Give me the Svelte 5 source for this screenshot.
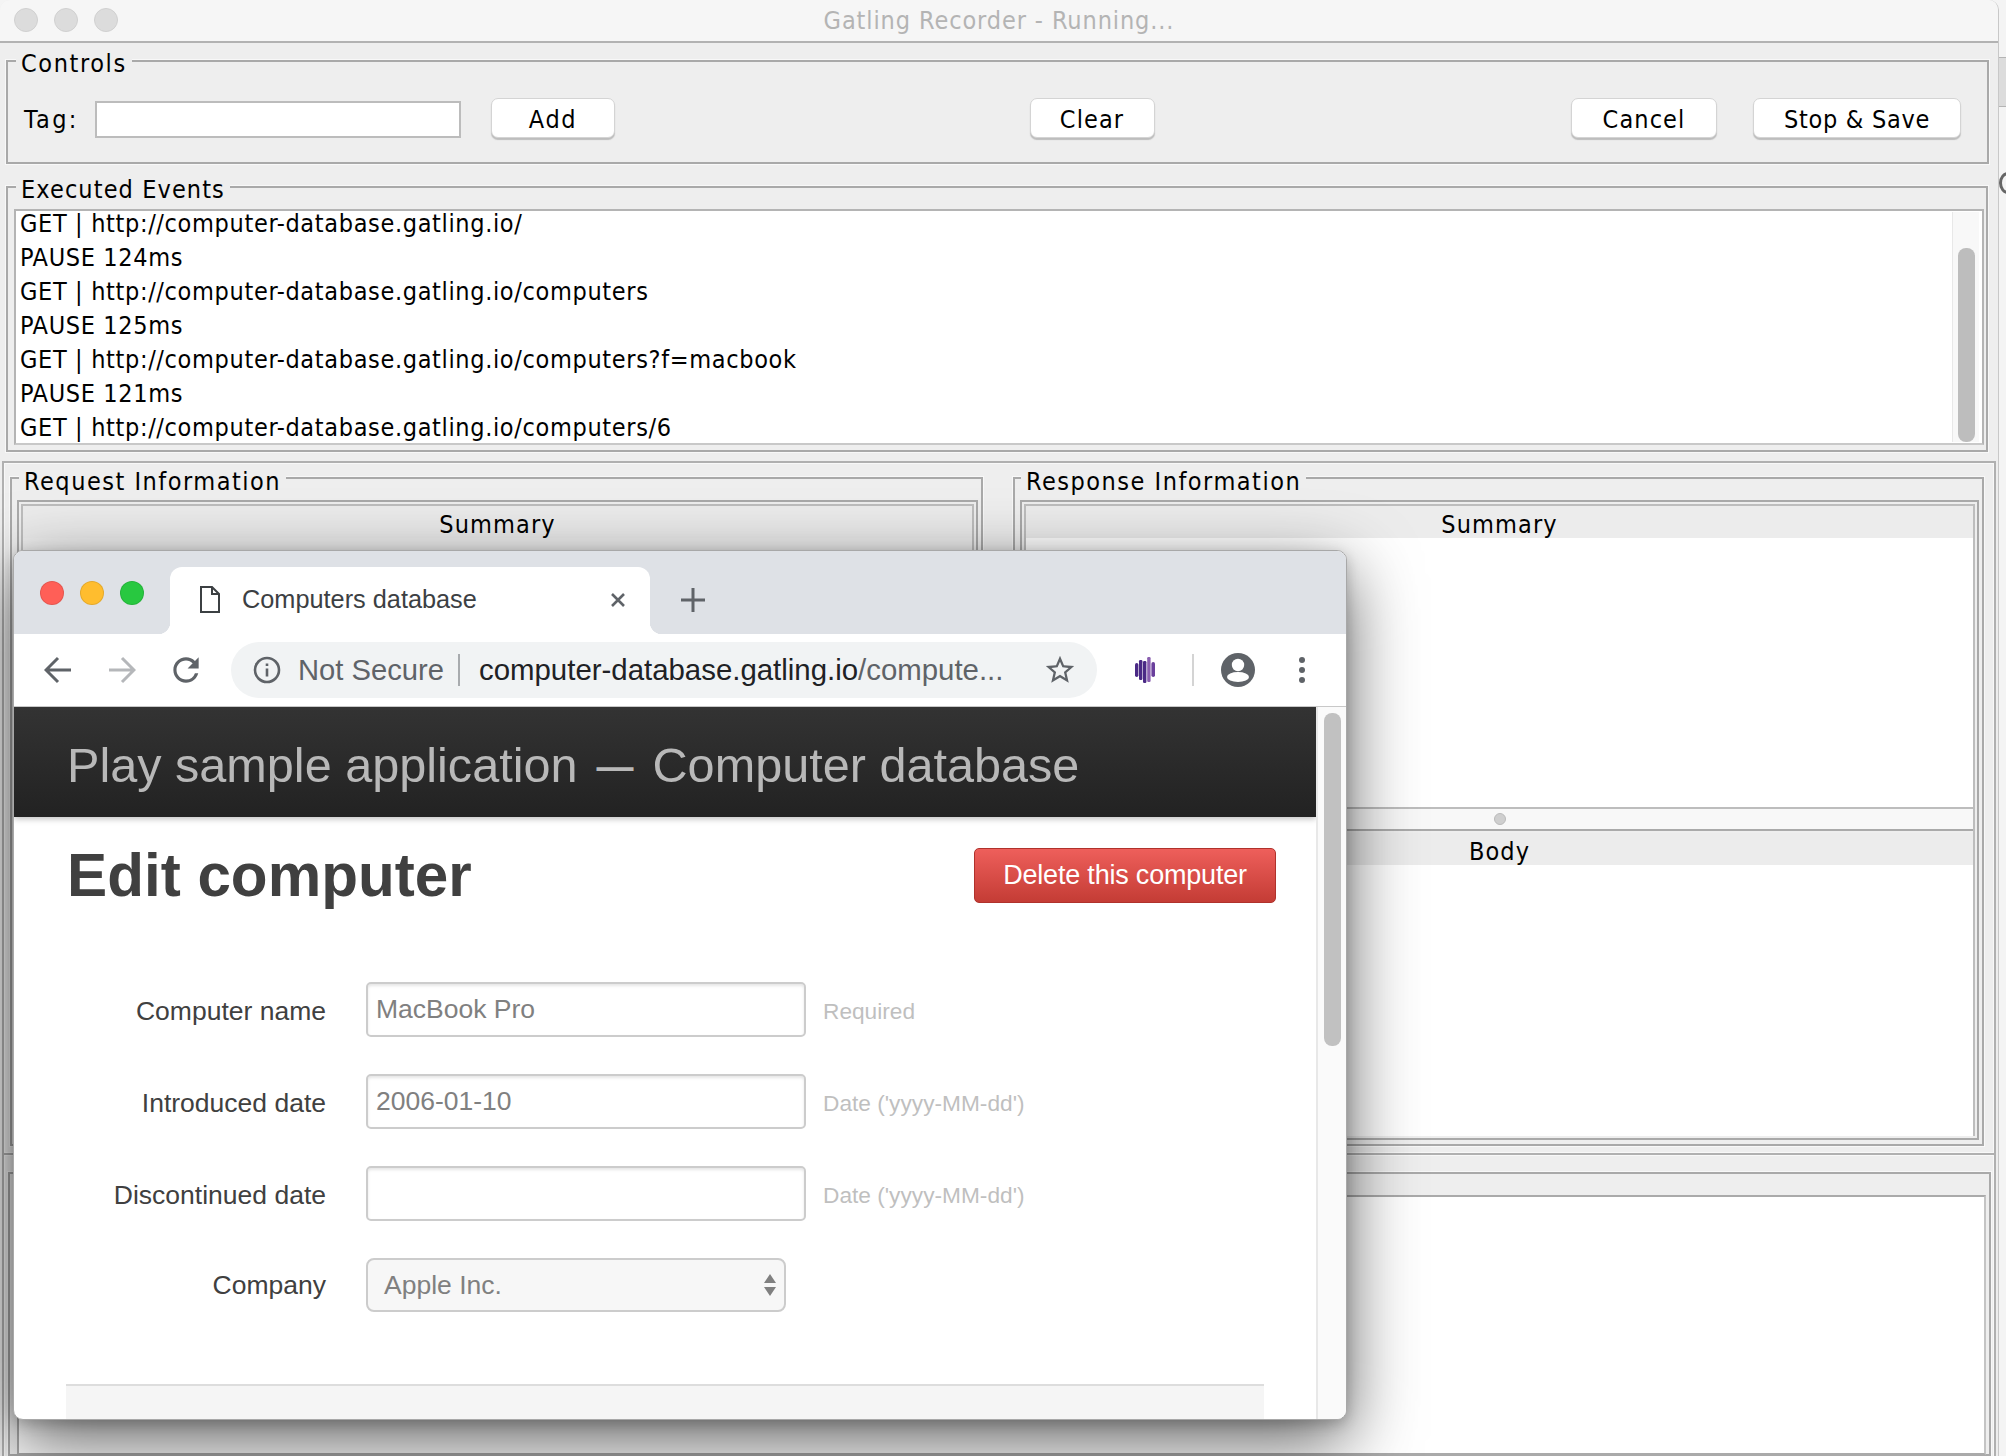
<script>
  const events = [
    'GET | http://computer-database.gatling.io/',
    'PAUSE 124ms',
    'GET | http://computer-database.gatling.io/computers',
    'PAUSE 125ms',
    'GET | http://computer-database.gatling.io/computers?f=macbook',
    'PAUSE 121ms',
    'GET | http://computer-database.gatling.io/computers/6'
  ];
  const fields = [
    { label: 'Computer name', value: 'MacBook Pro', help: 'Required' },
    { label: 'Introduced date', value: '2006-01-10', help: "Date ('yyyy-MM-dd')" },
    { label: 'Discontinued date', value: '', help: "Date ('yyyy-MM-dd')" }
  ];
</script>

<div class="desk">
  <div class="java">
    <div class="titlebar">
      <div class="lights"><i></i><i></i><i></i></div>
      <span class="wtitle">Gatling Recorder - Running...</span>
    </div>

    <section class="group controls">
      <span class="legend ctl-legend">Controls</span>
      <div class="ctl-row">
        <div class="ctl-left">
          <span class="tag">Tag:</span>
          <div class="jinput"></div>
          <div class="jbtn add">Add</div>
        </div>
        <div class="jbtn clear">Clear</div>
        <div class="ctl-right">
          <div class="jbtn cancel">Cancel</div>
          <div class="jbtn stop">Stop &amp; Save</div>
        </div>
      </div>
    </section>

    <section class="group events">
      <span class="legend">Executed Events</span>
      <div class="list">
        <div class="lines">
          {#each events as e}<div class="line">{e}</div>{/each}
        </div>
        <div class="track"><div class="thumb"></div></div>
      </div>
    </section>

    <div class="panel one">
      <section class="group info req">
        <span class="legend">Request Information</span>
        <div class="split">
          <div class="hdr">Summary</div>
        </div>
      </section>
      <section class="group info res">
        <span class="legend">Response Information</span>
        <div class="split">
          <div class="hdr">Summary</div>
          <div class="pane top"></div>
          <div class="grip"><i></i></div>
          <div class="hdr body-hdr">Body</div>
          <div class="pane"></div>
        </div>
      </section>
    </div>

    <div class="panel two">
      <section class="group bottom">
        <div class="blist"></div>
      </section>
    </div>
  </div>

  <div class="behind">
    <div class="band"></div>
    <div class="arc"></div>
  </div>

  <div class="browser">
    <div class="tabstrip">
      <div class="dots"><i class="r"></i><i class="y"></i><i class="g"></i></div>
      <div class="tab">
        <svg class="doc" width="20" height="27" viewBox="0 0 20 27" fill="none" stroke="#3c4043" stroke-width="2">
          <path d="M1 1H12L19 8V26H1Z" /><path d="M12 1V8H19" />
        </svg>
        <span class="tabtitle">Computers database</span>
        <svg class="close" width="16" height="16" viewBox="0 0 16 16" stroke="#5f6368" stroke-width="2.6">
          <path d="M2 2L14 14M14 2L2 14" />
        </svg>
      </div>
      <svg class="plus" width="24" height="24" viewBox="0 0 24 24" stroke="#5f6368" stroke-width="3">
        <path d="M12 0V24M0 12H24" />
      </svg>
    </div>

    <div class="toolbar">
      <svg class="nav back" width="28" height="28" viewBox="0 0 28 28" fill="none" stroke="#5f6368" stroke-width="3">
        <path d="M27 14H3M14 2L2 14L14 26" />
      </svg>
      <svg class="nav fwd" width="28" height="28" viewBox="0 0 28 28" fill="none" stroke="#b5b7ba" stroke-width="3">
        <path d="M1 14H25M14 2L26 14L14 26" />
      </svg>
      <svg class="nav reload" width="38" height="38" viewBox="0 0 24 24" fill="#5f6368">
        <path d="M17.65 6.35A7.958 7.958 0 0 0 12 4c-4.42 0-7.99 3.58-7.99 8s3.57 8 7.99 8c3.73 0 6.84-2.55 7.73-6h-2.08A5.99 5.99 0 0 1 12 18c-3.31 0-6-2.69-6-6s2.69-6 6-6c1.66 0 3.14.69 4.22 1.78L13 11h7V4l-2.35 2.35z" />
      </svg>
      <div class="omni">
        <svg class="infoi" width="28" height="28" viewBox="0 0 28 28" fill="none" stroke="#5f6368" stroke-width="2.6">
          <circle cx="14" cy="14" r="12" /><path d="M14 12.5V20.5M14 7.5V10" />
        </svg>
        <span class="insecure">Not Secure</span>
        <span class="odiv"></span>
        <span class="url">computer-database.gatling.io<span class="urlrest">/compute...</span></span>
        <svg class="star" width="34" height="34" viewBox="0 0 24 24" fill="#5f6368">
          <path d="M22 9.24l-7.19-.62L12 2 9.19 8.63 2 9.24l5.46 4.73L5.82 21 12 17.27 18.18 21l-1.63-7.03L22 9.24zM12 15.4l-3.76 2.27 1-4.28-3.32-2.88 4.38-.38L12 6.1l1.71 4.04 4.38.38-3.32 2.88 1 4.28L12 15.4z" />
        </svg>
      </div>
      <svg class="gat" width="20" height="26" viewBox="0 0 20 26">
        <rect x="0" y="6" width="3.4" height="14" rx="1.7" fill="#4b2a86" />
        <rect x="4" y="3" width="3.4" height="20" rx="1.2" fill="#4b2a86" />
        <rect x="8" y="4" width="3.4" height="22" rx="1.2" fill="#4b2a86" />
        <rect x="12.2" y="0" width="3.4" height="25" rx="1.2" fill="#8a5fb0" />
        <rect x="16.4" y="5" width="3.6" height="15" rx="1.8" fill="#6a3f9c" />
      </svg>
      <span class="tdiv"></span>
      <svg class="avatar" width="34" height="34" viewBox="0 0 34 34">
        <circle cx="17" cy="17" r="17" fill="#5f6368" />
        <circle cx="17" cy="12" r="6.2" fill="#fff" />
        <ellipse cx="17" cy="24" rx="11" ry="5" fill="#fff" />
      </svg>
      <svg class="menu" width="6" height="26" viewBox="0 0 6 26" fill="#5f6368">
        <circle cx="3" cy="3" r="3" /><circle cx="3" cy="13" r="3" /><circle cx="3" cy="23" r="3" />
      </svg>
    </div>

    <div class="viewport">
      <div class="page">
        <header class="topbar"><span>Play sample application<span class="dash">—</span>Computer database</span></header>
        <div class="head">
          <h1>Edit computer</h1>
          <div class="delete">Delete this computer</div>
        </div>
        <div class="form">
          {#each fields as f}
            <div class="row">
              <span class="lbl">{f.label}</span>
              <div class="input">{f.value}</div>
              <span class="help">{f.help}</span>
            </div>
          {/each}
          <div class="row">
            <span class="lbl">Company</span>
            <div class="select">
              <span>Apple Inc.</span>
              <svg width="12" height="22" viewBox="0 0 12 22" fill="#808080">
                <path d="M6 0L12 9H0ZM0 13H12L6 22Z" />
              </svg>
            </div>
          </div>
        </div>
        <div class="actions"></div>
      </div>
      <div class="vbar"><div class="vthumb"></div></div>
    </div>
  </div>
</div>

<style>
  :global(body) { margin: 0; background: #f4f4f4; }
  .desk {
    width: 2006px; height: 1456px; display: flex; overflow: hidden; position: relative;
    background: #f4f4f4; font-family: "Liberation Sans", Arial, sans-serif;
  }

  /* Java window */
  .java {
    width: 1999px; height: 1456px; flex: none; background: #eeeeee; overflow: hidden;
    border-radius: 10px 10px 0 0; box-sizing: border-box; border-right: 1px solid #c8c8c8;
    font-family: "DejaVu Sans", sans-serif; font-stretch: condensed; font-size: 25px; color: #000;
    letter-spacing: 1.1px;
  }
  .titlebar {
    height: 41px; background: #f6f6f6; border-bottom: 2px solid #b2b2b2;
    display: flex; align-items: center; justify-content: center; position: relative;
  }
  .lights { position: absolute; left: 14px; top: 8px; display: flex; gap: 16px; }
  .lights i { width: 22px; height: 22px; border-radius: 50%; background: #dcdcdc; border: 1px solid #d0d0d0; }
  .wtitle { color: #b4b4b4; font-size: 25px; letter-spacing: .9px; }

  .group { position: relative; box-sizing: border-box; border: 2px solid #a9a9a9; box-shadow: 0 0 0 1px #f8f8f8; }
  .legend {
    position: absolute; top: -13px; left: 8px; background: #eeeeee; padding: 0 5px;
    line-height: 30px; white-space: nowrap;
  }
  .ctl-legend { letter-spacing: 1.6px; }

  .controls { margin: 17px 0 0 6px; width: 1983px; height: 104px; }
  .ctl-row {
    display: flex; justify-content: space-between; align-items: center;
    height: 40px; margin-top: 37px; padding: 0 26px 0 16px;
  }
  .ctl-left, .ctl-right { display: flex; align-items: center; }
  .tag { width: 71px; letter-spacing: 2.4px; }
  .jinput { width: 366px; height: 37px; box-sizing: border-box; background: #fff; border: 2px solid #bcbcbc; margin-right: 30px; }
  .jbtn {
    height: 40px; box-sizing: border-box; background: #fff; border: 1px solid #d4d4d4; border-radius: 7px;
    box-shadow: 0 2px 1px #bdbdbd; display: flex; align-items: center; justify-content: center; margin-top: -2px;
    padding-top: 3px;
  }
  .add { width: 124px; letter-spacing: 1.6px; }
  .clear { width: 125px; margin-right: 2px; }
  .cancel { width: 146px; margin-right: 36px; }
  .stop { width: 208px; letter-spacing: .7px; }

  .events { margin: 22px 0 0 6px; width: 1982px; height: 266px; padding: 21px 2px 5px 6px; }
  .list {
    height: 236px; box-sizing: border-box; background: #fff; border: 2px solid #b4b4b4; border-bottom-color: #c8c8c8;
    display: flex; overflow: hidden;
  }
  .lines { flex: 1; padding: 0 0 0 4px; margin-top: -4px; letter-spacing: .65px; }
  .line { height: 34px; line-height: 34px; white-space: nowrap; }
  .track { width: 27px; margin: 1px 3px 1px 0; box-sizing: border-box; background: #f8f8f8; border-left: 1px solid #e8e8e8; padding: 36px 4px 0 5px; }
  .thumb { height: 194px; background: #bdbdbd; border-radius: 8px; }

  .panel { box-sizing: border-box; width: 1994px; margin-left: 2px; border: 2px solid #b0b0b0; box-shadow: inset 0 0 0 1px #f8f8f8; }
  .one { margin-top: 9px; height: 694px; display: flex; padding: 14px 0 0 6px; }
  .info { height: 669px; }
  .req { width: 973px; margin-right: 30px; }
  .res { width: 971px; }
  .info .legend { left: 6px; top: -12px; letter-spacing: 1.5px; }
  .req .legend { left: 7px; }
  .split {
    position: absolute; left: 5px; right: 3px; top: 21px; bottom: 4px; box-sizing: border-box;
    border: 2px solid #a9a9a9; padding: 2px; box-shadow: inset 0 0 0 2px #eee, inset 0 0 0 4px #bdbdbd;
    display: flex; flex-direction: column;
  }
  .hdr {
    height: 32px; margin: 2px 2px 0; flex: none; background: #ececec;
    display: flex; align-items: center; justify-content: center; padding-top: 5px; box-sizing: border-box;
  }
  .pane { flex: 1; background: #fff; margin: 0 2px; }
  .pane.top { flex: none; height: 269px; }
  .grip { height: 24px; flex: none; background: #f8f8f8; border-top: 2px solid #bdbdbd; border-bottom: 2px solid #aaa; display: flex; align-items: center; justify-content: center; margin: 0 2px; box-sizing: border-box; }
  .grip i { width: 12px; height: 12px; border-radius: 50%; background: #cfcfcf; border: 1px solid #bbb; box-sizing: border-box; }
  .body-hdr { margin-top: 2px; }

  .two { height: 302px; border-bottom: 0; border-top: 0; padding: 17px 0 0 4px; }
  .bottom { width: 1983px; height: 284px; padding: 21px 3px 0 7px; }
  .blist { height: 260px; background: #fff; border: 2px solid #aaa; border-right-color: #c4c4c4; box-sizing: border-box; }

  .behind { flex: 1; background: #f4f4f4; position: relative; overflow: hidden; }
  .band { margin-top: 57px; height: 50px; box-sizing: border-box; background: #dcdcdc; border: solid #b4b4b4; border-width: 1px 0; }
  .arc { position: absolute; left: 0; top: 172px; width: 18px; height: 22px; box-sizing: border-box; border: 3px solid #666; border-radius: 50%; }

  /* Chrome window */
  .browser {
    position: absolute; left: 13px; top: 550px; width: 1334px; height: 870px; border-radius: 10px; overflow: hidden;
    background: #fff; display: flex; flex-direction: column; box-sizing: border-box; border: 1px solid #a8a8a8;
    box-shadow: 0 22px 70px rgba(0,0,0,.62), 0 4px 14px rgba(0,0,0,.2);
  }
  .tabstrip { height: 83px; flex: none; background: #dee1e6; display: flex; align-items: flex-end; position: relative; }
  .dots { position: absolute; left: 26px; top: 30px; display: flex; gap: 16px; }
  .dots i { width: 24px; height: 24px; border-radius: 50%; box-sizing: border-box; border: 1px solid rgba(0,0,0,.1); }
  .r { background: #ff5f57; } .y { background: #ffbd2e; } .g { background: #28c840; }
  .tab {
    position: relative; margin-left: 156px; width: 480px; height: 67px; background: #fff; border-radius: 12px 12px 0 0;
    display: flex; align-items: center; padding: 0 24px 2px 30px; box-sizing: border-box;
  }
  .tab::before, .tab::after { content: ""; position: absolute; bottom: 0; width: 12px; height: 12px; background: radial-gradient(circle at 0 0, transparent 12px, #fff 12.5px); }
  .tab::before { left: -12px; }
  .tab::after { right: -12px; transform: scaleX(-1); }
  .tabtitle { font-size: 25.3px; color: #3c4043; margin-left: 22px; flex: 1; }
  .plus { margin: 0 0 22px 31px; }

  .toolbar { height: 73px; flex: none; background: #fff; border-bottom: 1px solid #c8c8c8; display: flex; align-items: center; box-sizing: border-box; position: relative; }
  .nav { flex: none; }
  .back { margin-left: 30px; } .fwd { margin-left: 36px; } .reload { margin-left: 31px; }
  .omni {
    width: 866px; height: 56px; margin-left: 26px; background: #f1f3f4; border-radius: 28px; flex: none;
    display: flex; align-items: center; box-sizing: border-box; padding-left: 22px; position: relative;
  }
  .insecure { font-size: 29.2px; color: #5f6368; margin-left: 17px; width: 144px; white-space: nowrap; }
  .odiv { width: 2px; height: 32px; background: #a8abae; margin: 0 19px 0 16px; }
  .url { font-size: 29.4px; color: #202124; white-space: nowrap; }
  .urlrest { color: #5f6368; }
  .star { position: absolute; right: 20px; top: 11px; }
  .gat { margin-left: 38px; flex: none; }
  .tdiv { width: 2px; height: 32px; background: #d4d4d4; margin-left: 37px; }
  .avatar { margin-left: 27px; flex: none; }
  .menu { margin-left: 44px; flex: none; }

  .viewport { flex: 1; display: flex; min-height: 0; }
  .page { width: 1302px; flex: none; overflow: hidden; display: flex; flex-direction: column; }
  .topbar {
    height: 110px; flex: none; background: linear-gradient(#333, #222); box-shadow: 0 2px 6px rgba(0,0,0,.25);
    display: flex; align-items: center; padding: 5px 0 0 53px; box-sizing: border-box; color: #b8b8b8; font-size: 48.6px; white-space: pre;
  }
  .dash { font-size: 37px; font-weight: bold; margin: 0 19px; vertical-align: 3px; }
  .head { display: flex; justify-content: space-between; align-items: center; padding: 31px 40px 0 53px; }
  h1 { margin: 0; font-size: 60.2px; line-height: 55px; font-weight: bold; color: #404040; }
  .delete {
    width: 302px; height: 55px; box-sizing: border-box; border: 1px solid #b0322c; border-radius: 5px; color: #fff; font-size: 27px;
    background: linear-gradient(#ee5f5b, #c43c35); display: flex; align-items: center; justify-content: center;
    letter-spacing: -.2px;
  }
  .form { margin-top: 79px; }
  .row { height: 55px; margin-bottom: 37px; display: flex; align-items: center; }
  .row:last-child { margin-bottom: 0; align-items: flex-start; }
  .lbl { width: 312px; text-align: right; font-size: 26.5px; color: #404040; margin-right: 40px; flex: none; padding-top: 3px; }
  .input {
    width: 440px; height: 55px; flex: none; box-sizing: border-box; background: #fff; border: 2px solid #ccc; border-radius: 5px;
    box-shadow: inset 0 2px 3px rgba(0,0,0,.1); color: #808080; font-size: 26.5px; line-height: 50px; padding-left: 8px;
  }
  .help { margin-left: 17px; font-size: 22.7px; color: #bfbfbf; padding-top: 3px; }
  .select {
    width: 420px; height: 54px; box-sizing: border-box; background: #f7f7f7; border: 2px solid #ccc; border-radius: 8px; color: #808080;
    font-size: 26.5px; display: flex; align-items: center; justify-content: space-between; padding: 0 8px 0 16px;
  }
  .row:last-child .lbl { line-height: 55px; padding-top: 0; }
  .actions { margin: 71px 52px 0 52px; flex: 1; background: #f5f5f5; border-top: 2px solid #ddd; }

  .vbar { flex: 1; background: #fafafa; border-left: 2px solid #e8e8e8; padding: 6px 5px 0 6px; }
  .vthumb { height: 333px; background: #c1c1c1; border-radius: 8px; }
</style>
